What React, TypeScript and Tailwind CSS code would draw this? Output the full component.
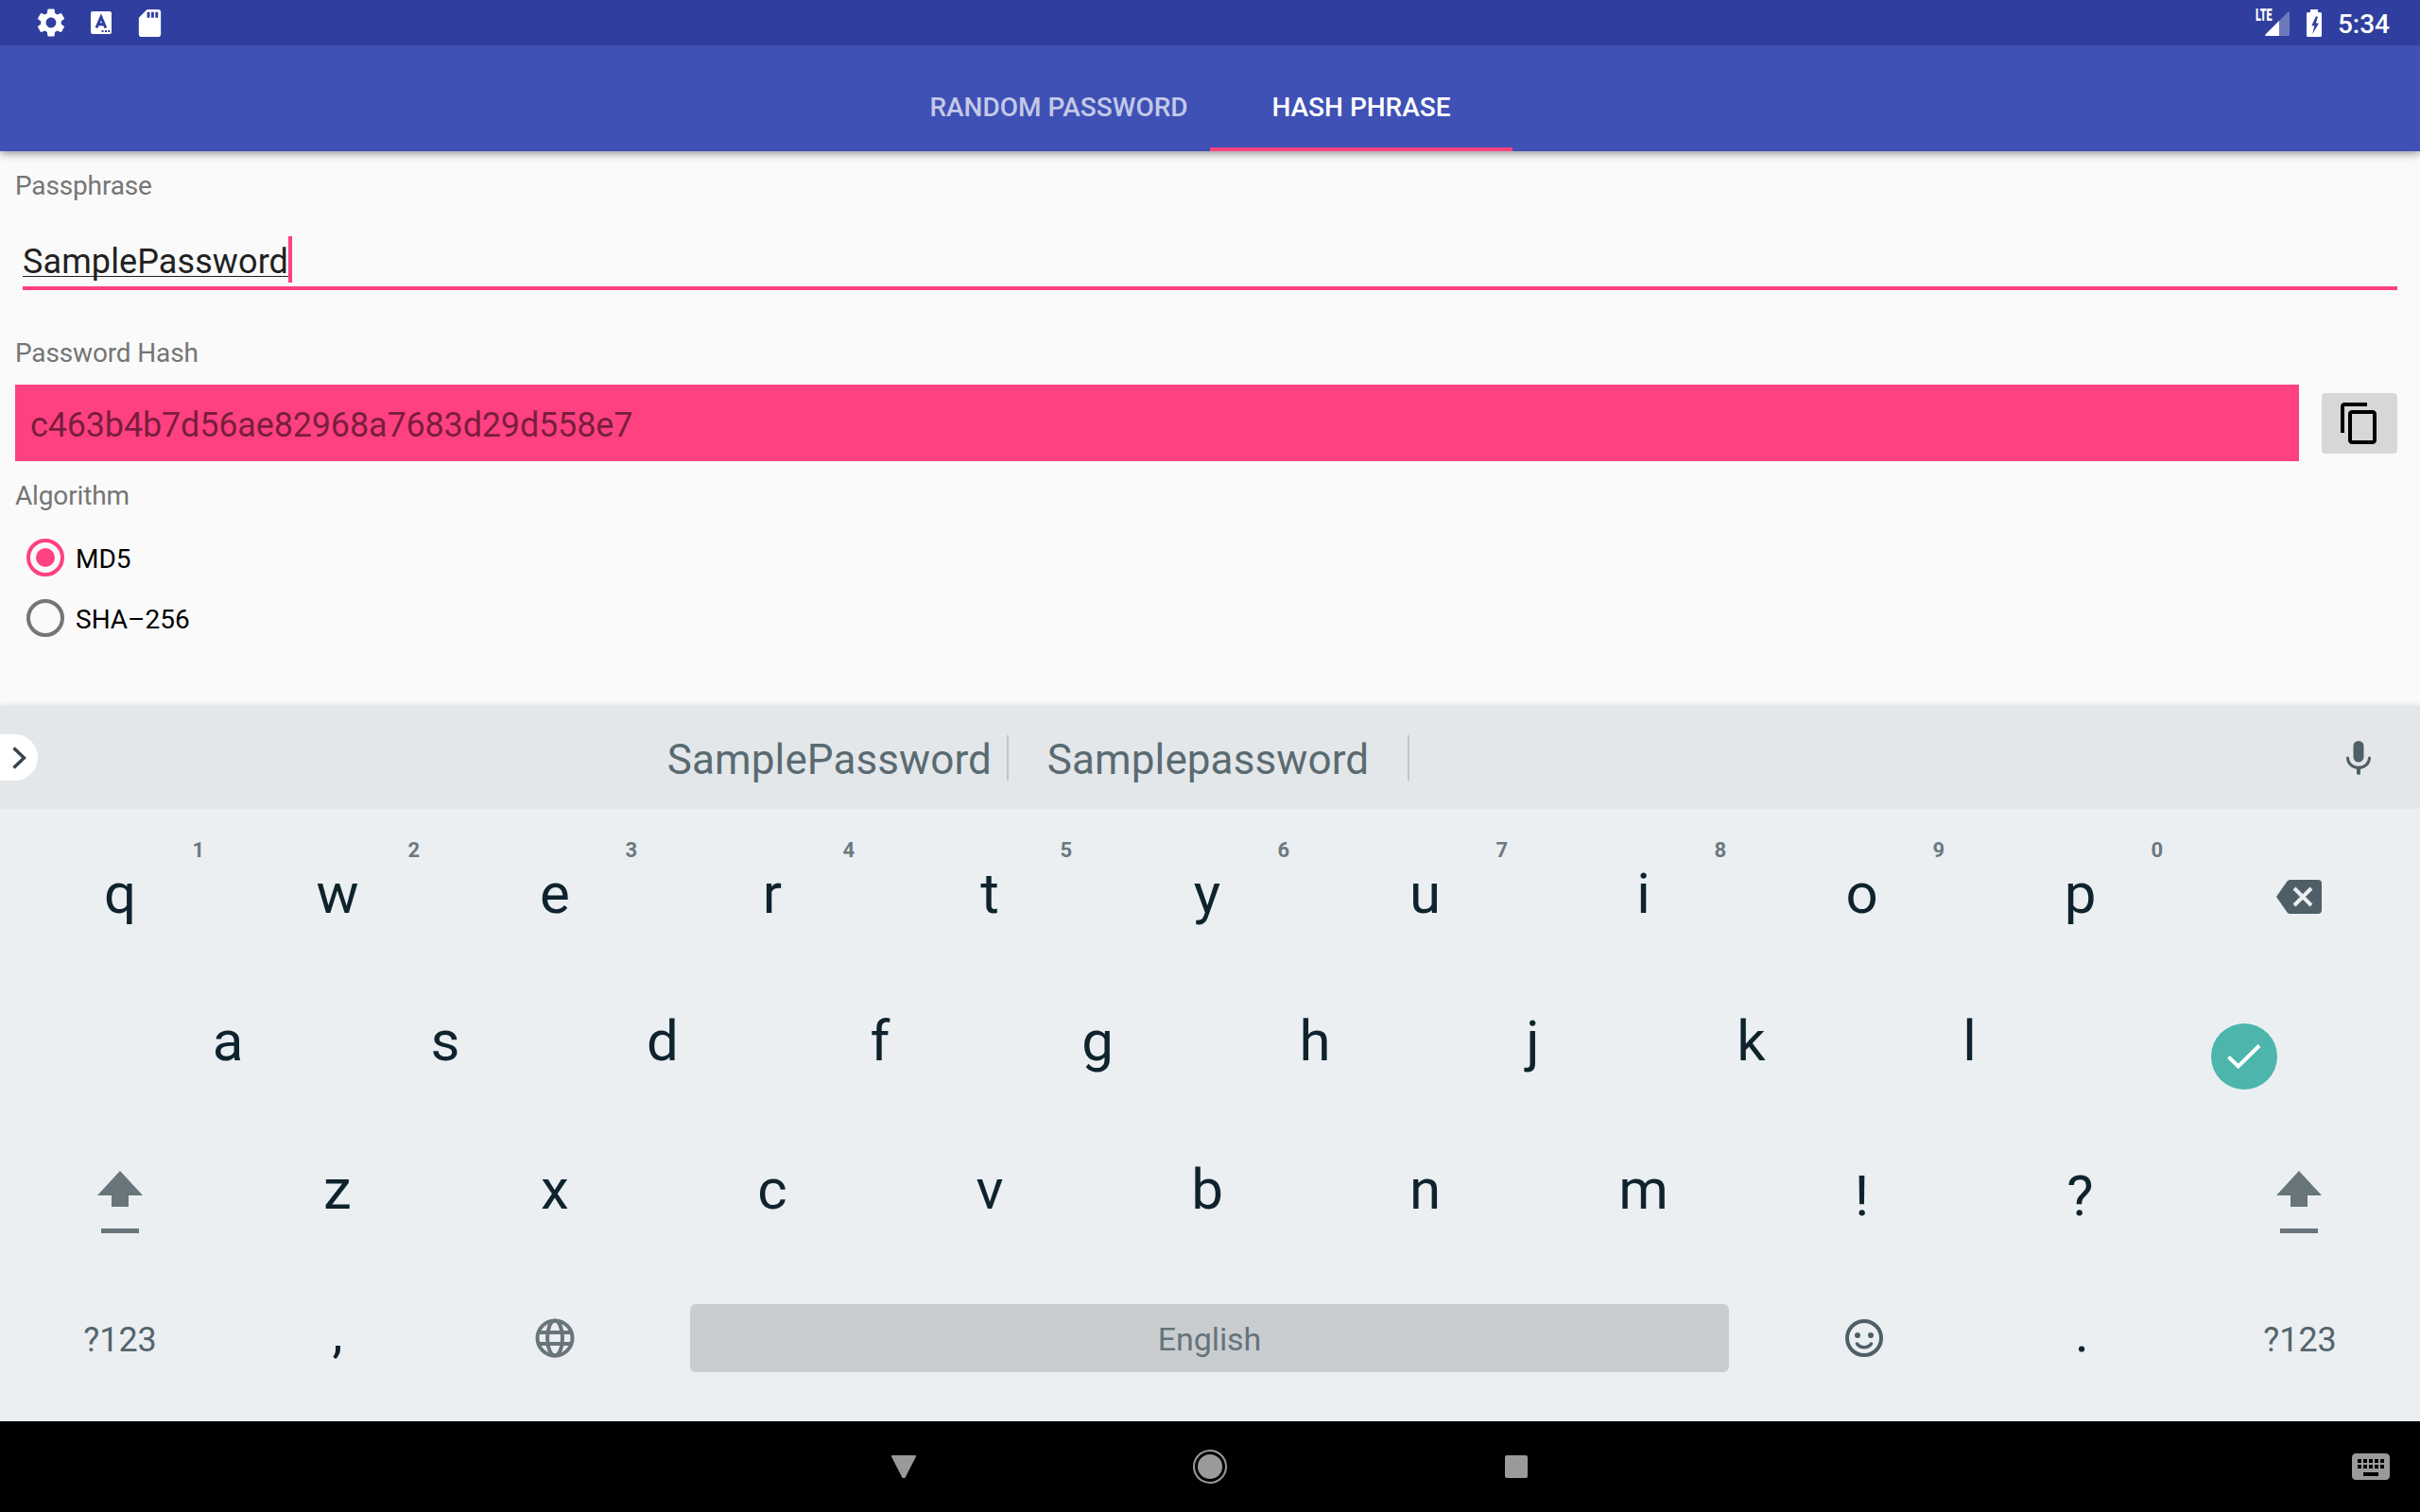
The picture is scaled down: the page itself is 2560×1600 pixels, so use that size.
import React from "react";
import { MdContentCopy, MdKeyboard, MdSettings, MdSdCard } from "react-icons/md";

function StatusBar() {
  return (
    <header className="relative z-20 flex h-12 shrink-0 items-center justify-between bg-[#303f9f] pl-9 pr-8 text-white">
      <div className="flex items-center">
        <MdSettings className="size-9" />
        <svg className="ml-[23.500px] h-6 w-[22px]" viewBox="0 0 22 24">
          <rect width="22" height="24" rx="2" fill="white" />
          <path d="M6 17.5 10.9 6 15.8 17.5M7.9 13.8h6" fill="none" stroke="#303f9f" strokeWidth="3" />
          <path d="M11.5 20h2v2h-2zM15 20h2v2h-2zM18.3 20h2v2h-2z" fill="#303f9f" />
        </svg>
        <MdSdCard className="ml-[23px] size-[35px]" />
      </div>
      <div className="flex items-center">
        <div className="relative mr-[18px] mt-0.5 size-[26px]">
          <svg className="size-[26px]" viewBox="0 0 26 26">
            <path d="M26 1.5v23a1.5 1.5 0 0 1-1.5 1.5H1.5C0 26 0 25 .5 24.500L24.500.5C25 0 26 0 26 1.500z" fill="white" fillOpacity=".3" />
            <path d="M15 10v16H1.500C0 26 0 25 .5 24.500z" fill="white" />
          </svg>
          <span className="absolute -left-[9.500px] -top-[5px] origin-left scale-x-[0.6] text-[18px] font-black leading-[18px]">LTE</span>
        </div>
        <svg className="h-[29px] w-4" viewBox="0 0 16 29">
          <path
            fillRule="evenodd"
            fill="white"
            d="M4 0h8v3h2.500a1.500 1.500 0 0 1 1.500 1.500v23a1.500 1.500 0 0 1-1.500 1.500h-13A1.500 1.500 0 0 1 0 27.500v-23A1.500 1.500 0 0 1 1.500 3H4zM9.800 7.500 5.300 17.200h3L6.300 26 13 14.500H9.900L12 7.500z"
          />
        </svg>
        <span className="ml-[17px] pt-[3px] text-[28px] font-medium leading-8">5:34</span>
      </div>
    </header>
  );
}

function Tabs() {
  return (
    <nav className="relative z-10 flex h-28 shrink-0 justify-center bg-[#3f51b5] text-[28px] font-medium text-white shadow-[0_2px_9px_rgba(0,0,0,0.45)]">
      <div className="flex w-80 items-center justify-center pt-[19px]">
        <span className="whitespace-nowrap text-white/70">RANDOM PASSWORD</span>
      </div>
      <div className="flex w-80 items-center justify-center border-b-4 border-[#ff4081] pt-[23px]">
        <span className="whitespace-nowrap">HASH PHRASE</span>
      </div>
    </nav>
  );
}

function Label({ children }: { children: React.ReactNode }) {
  return <div className="h-8 pt-px text-[28px] leading-8 tracking-[-0.15px] text-[#757575]">{children}</div>;
}

function Radio({ label, checked }: { label: string; checked?: boolean }) {
  return (
    <div className="flex h-16 items-center gap-3 pl-3">
      <span
        className={
          checked
            ? "flex size-10 items-center justify-center rounded-full border-4 border-[#ff4081]"
            : "flex size-10 items-center justify-center rounded-full border-4 border-[#757575]"
        }
      >
        {checked && <span className="size-5 rounded-full bg-[#ff4081]" />}
      </span>
      <span className="pt-[3px] text-[28px] leading-8 text-black">{label}</span>
    </div>
  );
}

function Form() {
  return (
    <main className="flex-1 bg-[#fafafa] px-4 pt-5">
      <Label>Passphrase</Label>
      <div className="mx-2 flex h-[95px] items-start border-b-4 border-[#ff4081] pt-[38px]">
        <span className="relative h-12 pt-[3px] text-[36px] leading-[48px] tracking-[0.1px] text-[#212121]">
          SamplePassword
          <span className="absolute left-0 top-[42px] h-px w-full bg-[#212121]" />
        </span>
        <span className="h-[49px] w-1 bg-[#ff4081]" />
      </div>
      <div className="mt-[50px]">
        <Label>Password Hash</Label>
      </div>
      <div className="mt-[18px] flex items-center gap-6 pr-2">
        <div className="h-[81px] flex-1 bg-[#ff4081] px-4 pt-[5px] text-[36px] leading-[77px] tracking-[-0.17px] text-black/54">
          c463b4b7d56ae82968a7683d29d558e7
        </div>
        <button className="flex h-16 w-20 items-center justify-center rounded bg-[#d6d7d7]">
          <MdContentCopy className="size-12 text-black" />
        </button>
      </div>
      <div className="mt-5">
        <Label>Algorithm</Label>
      </div>
      <div className="mt-[18px]">
        <Radio label="MD5" checked />
        <Radio label="SHA–256" />
      </div>
    </main>
  );
}

function Suggestions() {
  return (
    <div className="flex h-[109px] shrink-0 items-center bg-[#e3e7ea] text-[44px] tracking-[0.1px] text-[#5a6a71]">
      <div className="flex h-[49px] w-10 items-center rounded-r-full bg-white pl-[13px]">
        <svg className="h-6 w-[15px]" viewBox="0 0 15 24">
          <path d="M1.500 1.500 12.500 12 1.500 22.500" fill="none" stroke="#37474f" strokeWidth="3.600" />
        </svg>
      </div>
      <div className="flex h-12 w-[1027px] items-center justify-end border-r-2 border-[#c1c6c9] pr-4">
        <span className="pt-[5px]">SamplePassword</span>
      </div>
      <div className="flex h-12 w-[424px] items-center justify-center border-r-2 border-[#c1c6c9]">
        <span className="pt-[5px]">Samplepassword</span>
      </div>
      <svg className="ml-auto mr-[52px] h-9 w-[26px]" viewBox="0 0 26 36">
        <rect x="7.500" y="0" width="11" height="22.500" rx="5.500" fill="#4f5f67" />
        <path d="M1.500 18a11.500 10.500 0 0 0 23 0" fill="none" stroke="#4f5f67" strokeWidth="3" strokeLinecap="round" />
        <path d="M13 28.500V34" stroke="#4f5f67" strokeWidth="4" strokeLinecap="round" />
      </svg>
    </div>
  );
}

// The left six columns are one pixel narrower than the right five.
const NARROW = "relative flex h-full w-[230px] shrink-0 items-center justify-center";
const WIDE = "relative flex h-full w-[231px] shrink-0 items-center justify-center";

function Key({ label, hint, wide }: { label: string; hint?: string; wide?: boolean }) {
  return (
    <div className={wide ? WIDE : NARROW}>
      <span className="text-[60px] leading-[60px] text-[#0e232d]">{label}</span>
      {hint && (
        <span
          className={
            hint === "1"
              ? "absolute right-[26px] top-[20px] text-[22px] font-bold leading-6 text-[#6c797f]"
              : "absolute right-[28px] top-[20px] text-[22px] font-bold leading-6 text-[#6c797f]"
          }
        >
          {hint}
        </span>
      )}
    </div>
  );
}

function LowKey({ label }: { label: string }) {
  return (
    <div className={WIDE}>
      <span className="pt-[14px] text-[60px] leading-[60px] text-[#0e232d]">{label}</span>
    </div>
  );
}

function PunctuationKey({ label, wide }: { label: string; wide?: boolean }) {
  return (
    <div className={wide ? WIDE : NARROW}>
      <span className="pb-[8px] text-[56px] leading-[60px] text-[#0e232d]">{label}</span>
    </div>
  );
}

function ShiftKey() {
  return (
    <div className={NARROW}>
      <svg className="mt-[27px] h-[66px] w-12" viewBox="0 0 48 66" fill="#68757b">
        <path d="M24 0 48 26H33V38H15V26H0zM4 61h40v5H4z" />
      </svg>
    </div>
  );
}

function SymbolsKey() {
  return (
    <div className={NARROW}>
      <span className="pt-[6px] text-[36px] leading-10 text-[#55656c]">?123</span>
    </div>
  );
}

function Keyboard() {
  return (
    <section className="relative flex h-[757px] shrink-0 flex-col bg-[#ebeff2] shadow-[0_0_6px_rgba(0,0,0,0.16)]">
      <Suggestions />
      <div className="flex flex-1 flex-col px-3 pt-[11.5px]">
        <div className="flex h-[156.5px]">
          {"qwertyuiop".split("").map((c, i) => (
            <Key key={c} label={c} hint={String((i + 1) % 10)} wide={i > 5} />
          ))}
          <div className={WIDE}>
            <svg className="ml-px mt-[6px] h-9 w-12" viewBox="0 0 48 36">
              <path d="M14.500 0H44a4 4 0 0 1 4 4v28a4 4 0 0 1-4 4H14.500a4 4 0 0 1-3.200-1.700L0 18 11.300 1.700A4 4 0 0 1 14.500 0z" fill="#4f5f67" />
              <path d="m19 9 18 18M37 9 19 27" stroke="#ebeff2" strokeWidth="4" />
            </svg>
          </div>
        </div>
        <div className="flex h-[156.5px] pl-[114px]">
          {"asdfghjkl".split("").map((c, i) => (
            <Key key={c} label={c} wide={i > 5} />
          ))}
          <div className="flex flex-1 items-center justify-center pt-8">
            <div className="flex size-[70px] items-center justify-center rounded-full bg-[#4db6ac]">
              <svg className="h-[27px] w-9" viewBox="0 0 36 27">
                <path d="M1.500 13.500 11.700 23.500 34 1.500" fill="none" stroke="white" strokeWidth="4" />
              </svg>
            </div>
          </div>
        </div>
        <div className="flex h-[156.5px]">
          <ShiftKey />
          {"zxcvbnm".split("").map((c, i) => (
            <Key key={c} label={c} wide={i > 4} />
          ))}
          <LowKey label="!" />
          <LowKey label="?" />
          <div className="ml-px">
            <ShiftKey />
          </div>
        </div>
        <div className="flex h-[156.5px]">
          <SymbolsKey />
          <PunctuationKey label="," />
          <div className={NARROW}>
            <svg className="mt-[2px] size-[42px]" viewBox="0 0 42 42" fill="none" stroke="#68757b" strokeWidth="4">
              <circle cx="21" cy="21" r="18.500" />
              <ellipse cx="21" cy="21" rx="8" ry="18.500" />
              <path d="M4 15h34M4 27h34" />
            </svg>
          </div>
          <div className="flex flex-1 items-center pl-[28px] pr-[27px] pt-[2px]">
            <div className="flex h-[72px] flex-1 items-center justify-center rounded-md bg-[#c9cdd0] pt-[3px] text-[34px] tracking-[-0.1px] text-[#66737a]">
              English
            </div>
          </div>
          <div className={WIDE}>
            <svg className="mt-[2px] size-10" viewBox="0 0 40 40" fill="none" stroke="#4f5f67">
              <circle cx="20" cy="20" r="18" strokeWidth="4" />
              <circle cx="13" cy="17" r="3" fill="#4f5f67" stroke="none" />
              <circle cx="27" cy="17" r="3" fill="#4f5f67" stroke="none" />
              <path d="M12.500 26c3.500 5 11.500 5 15 0" strokeWidth="3.500" strokeLinecap="round" />
            </svg>
          </div>
          <PunctuationKey label="." wide />
          <SymbolsKey />
        </div>
      </div>
    </section>
  );
}

function NavigationBar() {
  return (
    <footer className="relative grid h-24 shrink-0 grid-cols-[1fr_324px_324px_1fr] items-center bg-black text-[#9a9a9a]">
      <div />
      <div className="-ml-[13px] flex items-center justify-between">
        <svg className="h-6 w-[26px]" viewBox="0 0 26 24">
          <path d="M1 1h24L13.800 23h-1.600z" fill="currentColor" stroke="currentColor" strokeWidth="2" strokeLinejoin="round" />
        </svg>
        <svg className="-mr-[18px] size-9" viewBox="0 0 36 36">
          <circle cx="18" cy="18" r="17" fill="none" stroke="currentColor" strokeWidth="2" />
          <circle cx="18" cy="18" r="13" fill="currentColor" />
        </svg>
      </div>
      <div className="-mr-3 flex justify-end">
        <div className="size-6 rounded-[2px] bg-current" />
      </div>
      <div className="flex justify-end pr-7">
        <MdKeyboard className="size-12" />
      </div>
    </footer>
  );
}

export default function App() {
  return (
    <div className="flex h-[1600px] w-[2560px] flex-col overflow-hidden bg-[#fafafa] font-[Roboto,sans-serif]">
      <StatusBar />
      <Tabs />
      <Form />
      <Keyboard />
      <NavigationBar />
    </div>
  );
}
